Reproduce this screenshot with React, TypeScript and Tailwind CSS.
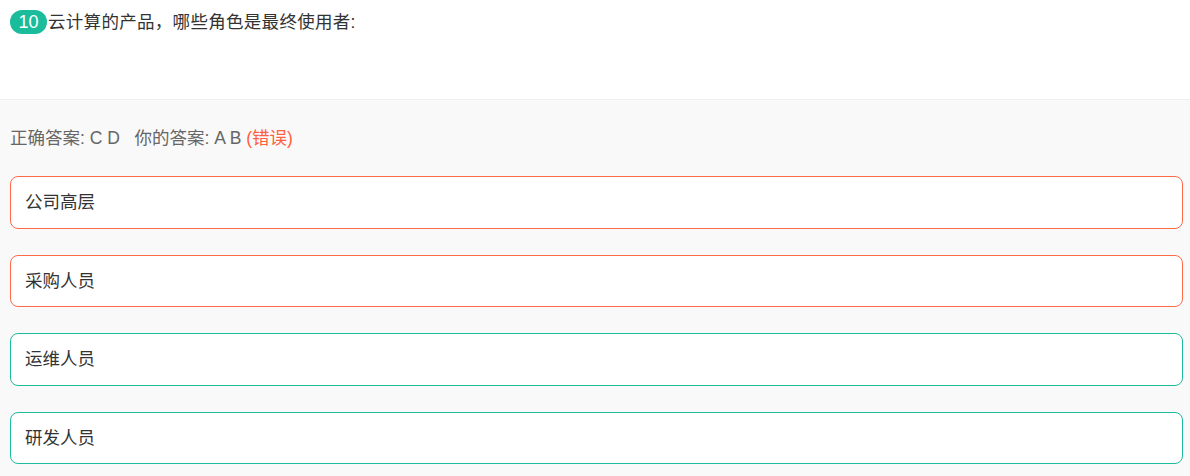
const options = [
  { text: '公司高层', wrong: true },
  { text: '采购人员', wrong: true },
  { text: '运维人员', wrong: false },
  { text: '研发人员', wrong: false },
];

export default function App() {
  return (
    <div
      className="w-[1190px] h-[476px] bg-[#f9f9f9] overflow-hidden text-[17.5px]"
      style={{ fontFamily: '"Liberation Sans", "Noto Sans CJK SC", sans-serif' }}
    >
      <div className="h-[100px] bg-white border-b border-[#eeeeee] px-[10px] pt-[10px]">
        <div className="flex items-center h-[24px]">
          <span className="inline-flex items-center justify-center h-[24px] w-[37px] rounded-full bg-[#1abc9c] text-white text-[18px] leading-none">
            10
          </span>
          <span className="ml-[1px] text-[#333333] tracking-[0.3px]">云计算的产品，哪些角色是最终使用者:</span>
        </div>
      </div>
      <div className="px-[10px] pt-[24px]">
        <div className="h-[28px] flex items-center text-[#666666]">
          正确答案: C D&nbsp;&nbsp;&nbsp;你的答案: A B&nbsp;<span className="text-[#ff5f3f]">(错误)</span>
        </div>
        <div className="mt-[24px] flex flex-col gap-[26px] w-[1173px]">
          {options.map((o) => (
            <div
              key={o.text}
              className={`h-[52.5px] rounded-[8px] bg-white border flex items-center px-[14px] text-[#333333] ${
                o.wrong ? 'border-[#ff6a47]' : 'border-[#1abc9c]'
              }`}
            >
              {o.text}
            </div>
          ))}
        </div>
      </div>
    </div>
  );
}
